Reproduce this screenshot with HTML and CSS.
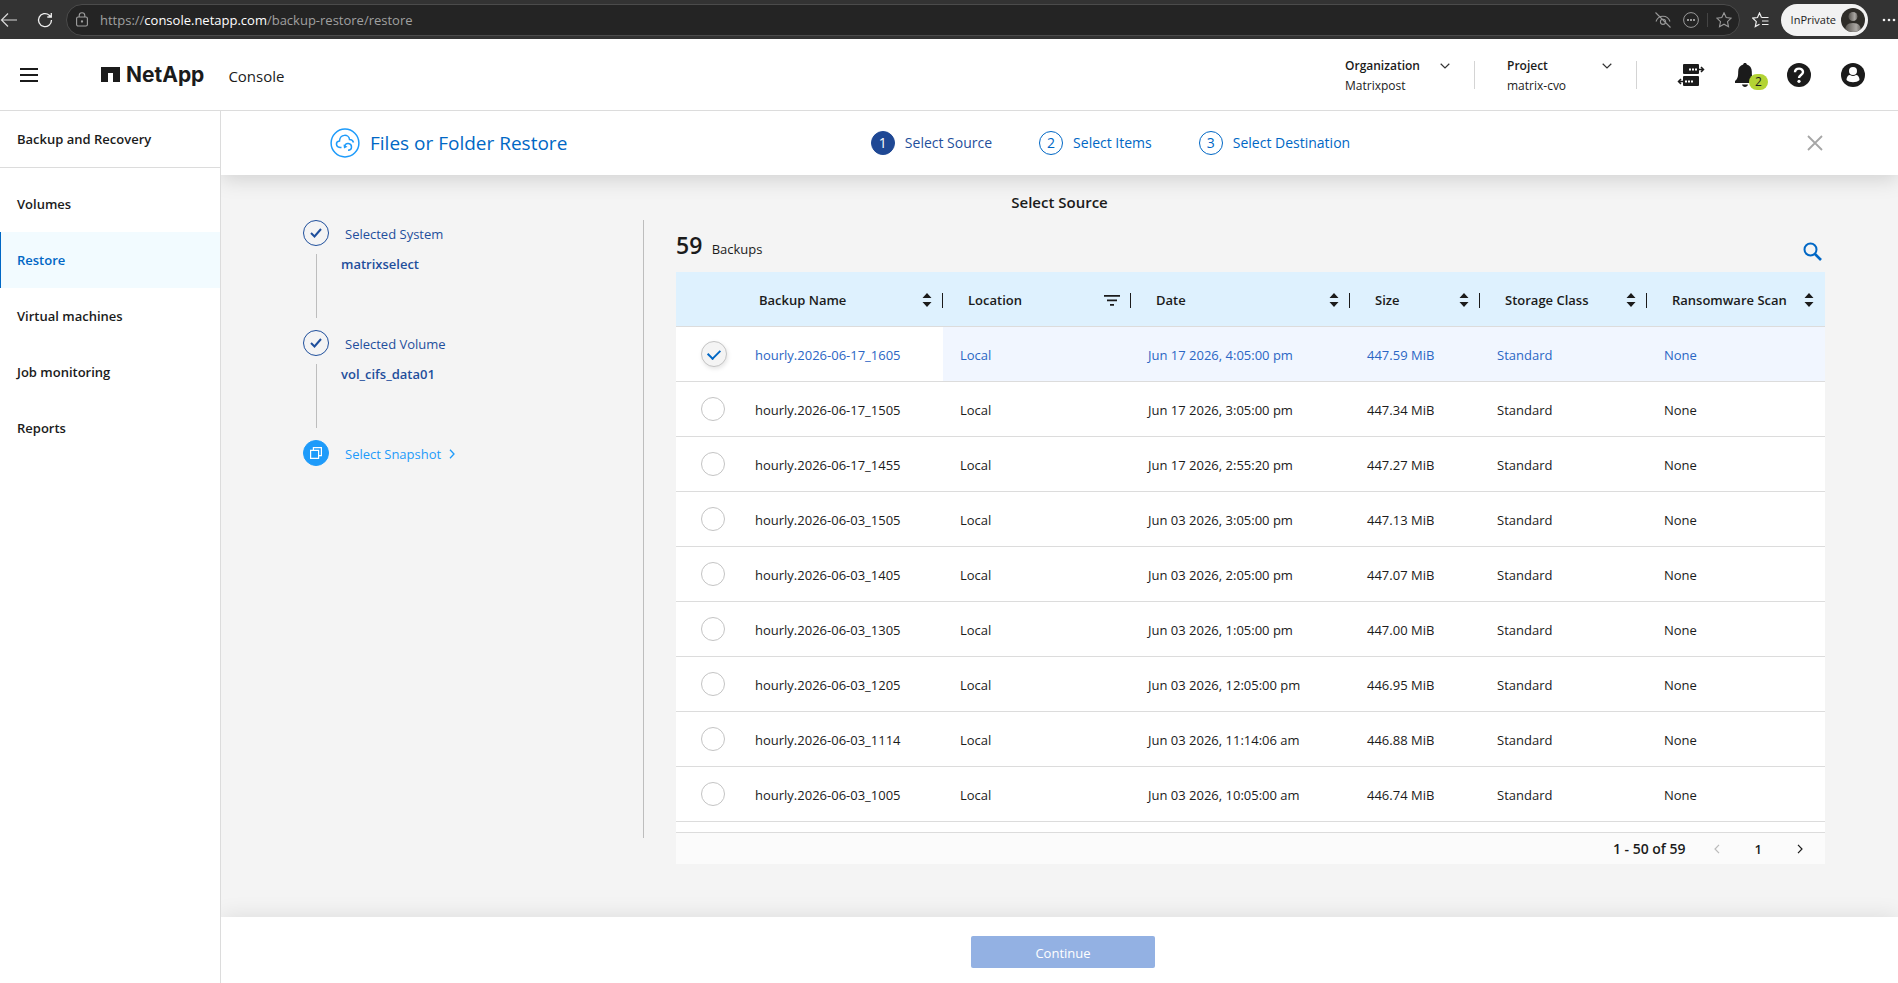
FILE: index.html
```html
<!DOCTYPE html>
<html lang="en">
<head>
<meta charset="utf-8">
<title>NetApp Console - Files or Folder Restore</title>
<link rel="stylesheet" href="styles.css">
</head>
<body>
<svg class="sprite" aria-hidden="true">
  <symbol id="sort" viewBox="0 0 10 14"><path d="M5 0 9.500 5H.5zM5 14 .5 9h9z" fill="#1b1b1b"/></symbol>
  <symbol id="chev" viewBox="0 0 10 6"><path d="M.7.8 5 5 9.300.8" fill="none" stroke="#333" stroke-width="1.200"/></symbol>
</svg>

<div class="browser">
  <button class="plain" aria-label="Back"><svg width="17" height="16" viewBox="0 0 17 16" fill="none" stroke="#d8d8d8" stroke-width="1.200"><path d="M17 8H2M8 1.500 1.500 8 8 14.500"/></svg></button>
  <button class="plain" aria-label="Reload"><svg width="16" height="16" viewBox="0 0 16 16" fill="none" stroke="#f0f0f0" stroke-width="1.300"><path d="M14.500 8A6.500 6.500 0 1 1 12.300 3.200L14 4.800M14.300 1v4h-4"/></svg></button>
  <div class="address">
    <svg width="12" height="15" viewBox="0 0 12 15" fill="none" stroke="#a0a0a0" stroke-width="1.100"><rect x=".6" y="5" width="10.800" height="9" rx="1.500"/><path d="M3.200 5V3.500a2.800 2.800 0 0 1 5.600 0V5"/><circle cx="6" cy="9.500" r=".6" fill="#a0a0a0"/></svg>
    <span class="url">https://<b>console.netapp.com</b>/backup-restore/restore</span>
    <button class="plain" aria-label="Tracking prevention"><svg width="16" height="16" viewBox="0 0 16 16" fill="none" stroke="#999" stroke-width="1.100"><path d="M.5.500l15 15M1 9.500C2 6.500 5 4.300 8 4.300s6 2.200 7 5.200"/><circle cx="8" cy="9.800" r="2.600"/></svg></button>
    <button class="plain" aria-label="More tools"><svg width="16" height="16" viewBox="0 0 16 16" fill="none" stroke="#999"><circle cx="8" cy="8" r="7.400"/><path d="M4 8h2M7 8h2M10 8h2" stroke-width="1.800"/></svg></button>
    <span class="address-split"></span>
    <button class="plain" aria-label="Add to favourites"><svg width="16" height="16" viewBox="0 0 16 16" fill="none" stroke="#999" stroke-width="1.100"><path d="M8 .8l2.200 4.700 5 .6-3.700 3.500 1 5.100L8 12.200l-4.500 2.500 1-5.100L.8 6.100l5-.6z"/></svg></button>
  </div>
  <button class="plain fav" aria-label="Favourites"><svg width="17" height="16" viewBox="0 0 17 16" fill="none" stroke="#f0f0f0" stroke-width="1.200"><path d="M9.500 5.500 7.500 1 5.500 5.500.8 6.100l3.500 3.500-1 5 4.200-2.300M9.500 5.500h7M10 9h6.500M10 12.500h6.500"/></svg></button>
  <button class="profile">InPrivate
    <svg width="24" height="24" viewBox="0 0 24 24"><defs><linearGradient id="av"><stop offset="0" stop-color="#55524d"/><stop offset=".7" stop-color="#aaa7a3"/><stop offset="1" stop-color="#6a6763"/></linearGradient><clipPath id="avc"><circle cx="12" cy="12" r="12"/></clipPath></defs><g clip-path="url(#avc)"><path d="M0 0h24v24H0z" fill="#2f2d29"/><circle cx="12" cy="8.500" r="4.500" fill="url(#av)"/><path d="M4 24c0-6 2-9 8-9s8 3 8 9z" fill="url(#av)"/></g></svg>
  </button>
  <button class="plain" aria-label="Settings"><svg width="14" height="4" viewBox="0 0 14 4" fill="#f0f0f0"><circle cx="2" cy="2" r="1.300"/><circle cx="7" cy="2" r="1.300"/><circle cx="12" cy="2" r="1.300"/></svg></button>
</div>

<header class="topbar">
  <button class="plain menu" aria-label="Menu"><svg width="18" height="14" viewBox="0 0 18 14" fill="#1b1b1b"><path d="M0 0h18v2H0zM0 6h18v2H0zM0 12h18v2H0z"/></svg></button>
  <a class="brand" href="#"><svg width="19" height="15" viewBox="0 0 19 15"><path d="M0 0h19v15h-7V6H7v9H0z" fill="#1b1b1b"/></svg>NetApp</a>
  <span class="product">Console</span>
  <button class="switcher"><span class="switcher-name">Organization <svg width="10" height="6"><use href="#chev"/></svg></span>Matrixpost</button>
  <button class="switcher"><span class="switcher-name">Project <svg width="10" height="6"><use href="#chev"/></svg></span>matrix-cvo</button>
  <div class="tools">
    <button class="plain" aria-label="Connectors"><svg width="28" height="24" viewBox="0 0 28 24"><g fill="#1b1b1b"><rect x="6" y="1" width="16" height="10" rx="1"/><rect x="6" y="13" width="16" height="10" rx="1"/></g><path d="M20 6.500h6M24 4l2.500 2.500L24 9M8 18.500H2M4 16l-2.500 2.500L4 21" fill="none" stroke="#1b1b1b" stroke-width="1.500"/><path d="M12 6.500h2M15 6.500h2M18 6.500h2M8 18.500h2M11 18.500h2M14 18.500h2" stroke="#fff" stroke-width="1.800"/></svg></button>
    <button class="plain bell" aria-label="Notifications"><svg width="20" height="24" viewBox="0 0 20 24" fill="#1b1b1b"><path d="M10 0c1.200 0 1.800.7 1.800 1.600C15 2.500 16.800 5 16.800 8.500c0 5.500.7 7.500 3.200 9.500v2H0v-2c2.500-2 3.200-4 3.200-9.500C3.200 5 5 2.500 8.200 1.600 8.200.7 8.800 0 10 0zM7 21.500h6c-.5 3.300-5.500 3.300-6 0z"/></svg><span class="badge">2</span></button>
    <button class="plain" aria-label="Help"><svg width="24" height="24" viewBox="0 0 24 24"><circle cx="12" cy="12" r="12" fill="#1b1b1b"/><path d="M8 9.300C8 4.500 16 4.500 16 9c0 3-4 3-4 6" fill="none" stroke="#fff" stroke-width="2.400"/><circle cx="12" cy="18.300" r="1.600" fill="#fff"/></svg></button>
    <button class="plain" aria-label="Account"><svg width="24" height="24" viewBox="0 0 24 24"><circle cx="12" cy="12" r="12" fill="#1b1b1b"/><circle cx="12" cy="8" r="4" fill="#fff"/><path d="M5.500 17c0-3 1.500-5 3.500-5 2 1.300 4 1.300 6 0 2 0 3.500 2 3.500 5-3 3-10 3-13 0z" fill="#fff"/></svg></button>
  </div>
</header>

<div class="shell">
  <aside class="sidebar">
    <h2 class="sidebar-title">Backup and Recovery</h2>
    <nav class="nav">
      <a href="#">Volumes</a>
      <a href="#" class="active">Restore</a>
      <a href="#">Virtual machines</a>
      <a href="#">Job monitoring</a>
      <a href="#">Reports</a>
    </nav>
  </aside>

  <main class="wizard">
    <div class="wizard-head">
      <h1 class="wizard-title"><svg width="30" height="30" viewBox="0 0 30 30" fill="none" stroke="#1e9bfa" stroke-width="1.500"><circle cx="15" cy="15" r="13.900"/><path d="M11.500 19.500H10c-4.500-.5-4.800-6-.5-6.500C10 5.500 19 6 19.500 11.500c2 0 3.500 1.200 4 3M14.500 18.500c1-4.500 7-3.500 7 .5 0 2-1.500 3.200-3.500 3.200"/><path d="m13.500 16.500.5 4 3.500-1.800z" fill="#1e9bfa" stroke="none"/></svg>Files or Folder Restore</h1>
      <ol class="steps">
        <li class="current"><span>1</span>Select Source</li>
        <li><span>2</span>Select Items</li>
        <li><span>3</span>Select Destination</li>
      </ol>
      <button class="plain close" aria-label="Close"><svg width="16" height="16" viewBox="0 0 16 16" stroke="#a6a6a6" stroke-width="1.800"><path d="m1 1 14 14M15 1 1 15"/></svg></button>
    </div>

    <div class="wizard-body">
      <h2 class="page-title">Select Source</h2>
      <div class="columns">
        <ul class="progress">
          <li><span class="mark"><svg width="12" height="10" viewBox="0 0 12 10"><path d="m1 5 3.500 3.500L11 1" fill="none" stroke="#1f4f9c" stroke-width="2"/></svg></span><span class="progress-name">Selected System</span><strong>matrixselect</strong></li>
          <li><span class="mark"><svg width="12" height="10" viewBox="0 0 12 10"><path d="m1 5 3.500 3.500L11 1" fill="none" stroke="#1f4f9c" stroke-width="2"/></svg></span><span class="progress-name">Selected Volume</span><strong>vol_cifs_data01</strong></li>
          <li class="now"><span class="mark"><svg width="12" height="12" viewBox="0 0 12 12" fill="none" stroke="#fff" stroke-width="1.200"><path d="M.6 3.400h8v8h-8z"/><path d="M3.400 3V.6h8v8H9"/></svg></span><span class="progress-name">Select Snapshot <svg width="6" height="10" viewBox="0 0 6 10"><path d="m1 .8 4 4.200-4 4.200" fill="none" stroke="#1e9bfa" stroke-width="1.300"/></svg></span></li>
        </ul>

        <section class="backups">
          <div class="backups-head">
            <p><b>59</b> Backups</p>
            <button class="plain" aria-label="Search"><svg width="19" height="19" viewBox="0 0 19 19" fill="none" stroke="#0067c5"><circle cx="7.500" cy="7.500" r="6" stroke-width="2"/><path d="m12 12 6 6" stroke-width="2.600"/></svg></button>
          </div>
          <table class="grid">
            <colgroup><col class="c-pick"><col class="c-name"><col class="c-loc"><col class="c-date"><col class="c-size"><col class="c-class"><col class="c-scan"></colgroup>
            <thead>
              <tr>
                <td></td>
                <th class="first"><div>Backup Name <svg width="10" height="14"><use href="#sort"/></svg></div></th>
                <th><div>Location <svg width="16" height="11" viewBox="0 0 16 11" fill="#1b1b1b"><path d="M0 0h16v1.800H0zM3 4.500h10v1.800H3zM6 9h4v1.800H6z"/></svg></div></th>
                <th><div>Date <svg width="10" height="14"><use href="#sort"/></svg></div></th>
                <th><div>Size <svg width="10" height="14"><use href="#sort"/></svg></div></th>
                <th><div>Storage Class <svg width="10" height="14"><use href="#sort"/></svg></div></th>
                <th class="last"><div>Ransomware Scan <svg width="10" height="14"><use href="#sort"/></svg></div></th>
              </tr>
            </thead>
            <tbody>
              <tr class="picked"><td><input type="radio" name="backup" id="b1" checked></td><td><label for="b1">hourly.2026-06-17_1605</label></td><td>Local</td><td>Jun 17 2026, 4:05:00 pm</td><td>447.59 MiB</td><td>Standard</td><td>None</td></tr>
              <tr><td><input type="radio" name="backup" id="b2"></td><td><label for="b2">hourly.2026-06-17_1505</label></td><td>Local</td><td>Jun 17 2026, 3:05:00 pm</td><td>447.34 MiB</td><td>Standard</td><td>None</td></tr>
              <tr><td><input type="radio" name="backup" id="b3"></td><td><label for="b3">hourly.2026-06-17_1455</label></td><td>Local</td><td>Jun 17 2026, 2:55:20 pm</td><td>447.27 MiB</td><td>Standard</td><td>None</td></tr>
              <tr><td><input type="radio" name="backup" id="b4"></td><td><label for="b4">hourly.2026-06-03_1505</label></td><td>Local</td><td>Jun 03 2026, 3:05:00 pm</td><td>447.13 MiB</td><td>Standard</td><td>None</td></tr>
              <tr><td><input type="radio" name="backup" id="b5"></td><td><label for="b5">hourly.2026-06-03_1405</label></td><td>Local</td><td>Jun 03 2026, 2:05:00 pm</td><td>447.07 MiB</td><td>Standard</td><td>None</td></tr>
              <tr><td><input type="radio" name="backup" id="b6"></td><td><label for="b6">hourly.2026-06-03_1305</label></td><td>Local</td><td>Jun 03 2026, 1:05:00 pm</td><td>447.00 MiB</td><td>Standard</td><td>None</td></tr>
              <tr><td><input type="radio" name="backup" id="b7"></td><td><label for="b7">hourly.2026-06-03_1205</label></td><td>Local</td><td>Jun 03 2026, 12:05:00 pm</td><td>446.95 MiB</td><td>Standard</td><td>None</td></tr>
              <tr><td><input type="radio" name="backup" id="b8"></td><td><label for="b8">hourly.2026-06-03_1114</label></td><td>Local</td><td>Jun 03 2026, 11:14:06 am</td><td>446.88 MiB</td><td>Standard</td><td>None</td></tr>
              <tr><td><input type="radio" name="backup" id="b9"></td><td><label for="b9">hourly.2026-06-03_1005</label></td><td>Local</td><td>Jun 03 2026, 10:05:00 am</td><td>446.74 MiB</td><td>Standard</td><td>None</td></tr>
            </tbody>
          </table>
          <div class="pager">
            <span>1 - 50 of 59</span>
            <button class="plain" aria-label="Previous page" disabled><svg width="6" height="10" viewBox="0 0 6 10"><path d="M5 .8 1 5l4 4.200" fill="none" stroke="#bbb" stroke-width="1.200"/></svg></button>
            <button class="plain">1</button>
            <button class="plain" aria-label="Next page"><svg width="6" height="10" viewBox="0 0 6 10"><path d="m1 .8 4 4.200-4 4.200" fill="none" stroke="#1b1b1b" stroke-width="1.200"/></svg></button>
          </div>
        </section>
      </div>
    </div>

    <footer class="wizard-foot"><button class="continue" disabled>Continue</button></footer>
  </main>
</div>
</body>
</html>
```
FILE: styles.css
```css
* { box-sizing: border-box; }

body {
  margin: 0;
  min-height: 100vh;
  display: flex;
  flex-direction: column;
  background: #fff;
  color: #1b1b1b;
  font: 13px/20px "Open Sans", "Noto Sans", sans-serif;
}

h1, h2, p, ul, ol { margin: 0; padding: 0; font-weight: 400; }
li { list-style: none; }
a { color: inherit; text-decoration: none; }
button { font: inherit; color: inherit; cursor: pointer; }
svg { display: block; flex: none; }
.sprite { display: none; }

.plain {
  display: flex;
  align-items: center;
  justify-content: center;
  padding: 0;
  border: 0;
  background: none;
}

/* Browser chrome */
.browser {
  display: flex;
  align-items: center;
  height: 39px;
  padding-right: 2px;
  background: #333;
}
.browser > .plain:nth-child(2) { margin: 0 13px 0 20px; }
.address {
  flex: 1;
  display: flex;
  align-items: center;
  gap: 12px;
  height: 32px;
  padding: 0 7px 0 9px;
  border: 1px solid #4b4b4b;
  border-radius: 16px;
  background: #242424;
}
.url { flex: 1; color: #a0a0a0; }
.url b { color: #fff; font-weight: 400; }
.address-split { width: 1px; height: 14px; margin: 0 -4px; background: #444; }
.fav { margin: 0 12px; }
.profile {
  display: flex;
  align-items: center;
  gap: 5px;
  height: 32px;
  margin-right: 14px;
  padding: 0 3px 0 10px;
  border: 0;
  border-radius: 16px;
  background: #f2f2f2;
  font-size: 11px;
}

/* Console header */
.topbar {
  display: flex;
  align-items: center;
  height: 72px;
  padding: 0 33px 0 20px;
  border-bottom: 1px solid #dcdcdc;
}
.brand {
  display: flex;
  align-items: center;
  gap: 6px;
  margin: 0 24px 0 63px;
  font: 700 21px/24px Inter, sans-serif;
}
.product { flex: 1; padding-top: 2px; font-size: 15px; font-weight: 500; }
.switcher {
  width: 130px;
  margin-right: 32px;
  padding: 2px 0 0;
  border: 0;
  background: linear-gradient(#d4d4d4, #d4d4d4) right center / 1px 28px no-repeat;
  text-align: left;
  font-size: 12px;
}
.switcher-name {
  display: flex;
  align-items: center;
  justify-content: space-between;
  padding-right: 25px;
  font-weight: 600;
}
.tools { display: flex; align-items: center; gap: 30px; padding-left: 8px; }
.bell { position: relative; margin: 0; }
.tools .bell { margin-right: 2px; }
.badge {
  position: absolute;
  left: 14px;
  top: 11px;
  width: 19px;
  height: 16px;
  border-radius: 8px;
  background: #b3d334;
  font-size: 12px;
  line-height: 16px;
}

/* Page frame */
.shell { flex: 1; display: flex; }
.sidebar { width: 221px; flex: none; border-right: 1px solid #dcdcdc; }
.sidebar-title {
  padding: 18px 17px;
  border-bottom: 1px solid #dcdcdc;
  font-size: 13px;
  font-weight: 600;
}
.nav { display: flex; flex-direction: column; padding-top: 8px; }
.nav a { padding: 18px 16px; border-left: 1px solid transparent; font-weight: 600; }
.nav .active { border-color: #0067c5; background: #f2fbff; color: #0067c5; }

.wizard { flex: 1; display: flex; flex-direction: column; min-width: 0; overflow: hidden; }
.wizard-head {
  position: relative;
  display: grid;
  grid-template-columns: 1fr auto 1fr;
  align-items: center;
  height: 64px;
  padding: 0 75px 0 109px;
  background: #fff;
  box-shadow: 0 4px 20px rgba(0, 0, 0, .15);
}
.wizard-title {
  display: flex;
  align-items: center;
  gap: 10px;
  color: #0067c5;
  font-size: 19px;
}
.steps { display: flex; gap: 47px; padding-left: 68px; color: #0067c5; font-size: 14px; }
.steps li { display: flex; align-items: center; gap: 10px; }
.steps span {
  width: 24px;
  height: 24px;
  border: 1px solid #0067c5;
  border-radius: 50%;
  line-height: 22px;
  text-align: center;
}
.steps .current { color: #1f4f9c; }
.steps .current span { border-color: #1f4894; background: #1f4894; color: #fff; }
.close { justify-self: end; }

.wizard-body { flex: 1; padding: 17px 0 52px; background: #f4f4f4; }
.page-title { font-size: 15px; font-weight: 600; text-align: center; }
.columns { display: flex; align-items: flex-start; gap: 32px; padding: 8px 73px 0 82px; }

/* Selection progress */
.progress { width: 341px; height: 618px; border-right: 1px solid #bdbdbd; color: #1f4f9c; }
.progress li {
  display: grid;
  grid-template-columns: 38px 1fr;
  grid-template-rows: 28px 1fr;
  height: 110px;
  align-items: center;
  background: linear-gradient(#bdbdbd, #bdbdbd) 13px 34px / 1px 64px no-repeat;
}
.mark {
  display: grid;
  place-items: center;
  align-self: start;
  width: 26px;
  height: 26px;
  border: 1px solid #1f4f9c;
  border-radius: 50%;
}
.progress-name { display: flex; align-items: center; gap: 8px; padding-left: 4px; }
.progress strong { grid-column: 2; align-self: start; padding-top: 6px; font-weight: 600; }
.progress .now { background: none; color: #1e9bfa; }
.now .mark { border-color: #1e9bfa; background: #1e9bfa; }

/* Backups table */
.backups { flex: 1; min-width: 0; }
.backups-head {
  display: flex;
  align-items: center;
  justify-content: space-between;
  height: 52px;
  padding-right: 3px;
}
.backups-head .plain { margin-top: 10px; }
.backups-head p { padding-top: 2px; line-height: 32px; }
.backups-head b { margin-right: 6px; font-size: 23px; font-weight: 600; }
.grid { width: 100%; table-layout: fixed; border-collapse: separate; border-spacing: 0; background: #fff; }
.c-pick { width: 62px; }
.c-name { width: 205px; }
.c-loc { width: 188px; }
.c-date { width: 219px; }
.c-size { width: 130px; }
.c-class { width: 167px; }
.c-scan { width: 178px; }
.grid th, .grid td { height: 55px; padding: 2px 0 0 17px; border-bottom: 1px solid #dcdcdc; text-align: left; }
.grid thead { background: #def1fe; }
.grid th { padding-left: 25px; font-weight: 600; white-space: nowrap; }
.grid .first { padding-left: 21px; }
.grid th div {
  display: flex;
  align-items: center;
  justify-content: space-between;
  padding-right: 11px;
  background: linear-gradient(#1b1b1b, #1b1b1b) right center / 1px 15px no-repeat;
}
.grid .last div { background: none; }
.grid td:first-child { padding: 0 0 0 25px; }
.picked { color: #2b66c4; }
.picked td:nth-child(n+3) { background: #f1f6ff; }
.grid input {
  appearance: none;
  display: grid;
  place-items: center;
  width: 24px;
  height: 24px;
  margin: 0;
  border: 1px solid #c4c4c4;
  border-radius: 50%;
  background: #fff;
}
.grid input:checked {
  width: 26px;
  height: 26px;
  background: #f4f4f4;
  box-shadow: 1px 2px 4px rgba(0, 0, 0, .1);
}
.grid input:checked::after {
  content: "";
  width: 10px;
  height: 6px;
  margin-bottom: 3px;
  border: solid #0067c5;
  border-width: 0 0 2px 2px;
  transform: rotate(-45deg);
}
.pager {
  display: flex;
  align-items: center;
  justify-content: flex-end;
  height: 42px;
  padding: 11px 22px 0 0;
  background: linear-gradient(#fff 10px, #dcdcdc 10px, #dcdcdc 11px, #fbfbfb 11px);
  font-weight: 600;
}
.pager span { margin-right: 28px; font-size: 14px; }
.pager .plain + .plain { margin-left: 35px; }

.wizard-foot {
  position: relative;
  display: flex;
  justify-content: center;
  padding: 19px 0 15px 7px;
  background: #fff;
  box-shadow: 0 -2px 20px rgba(0, 0, 0, .09);
}
.continue {
  width: 184px;
  height: 32px;
  padding-top: 2px;
  border: 0;
  border-radius: 2px;
  background: #93b1e3;
  color: #fff;
}
```
